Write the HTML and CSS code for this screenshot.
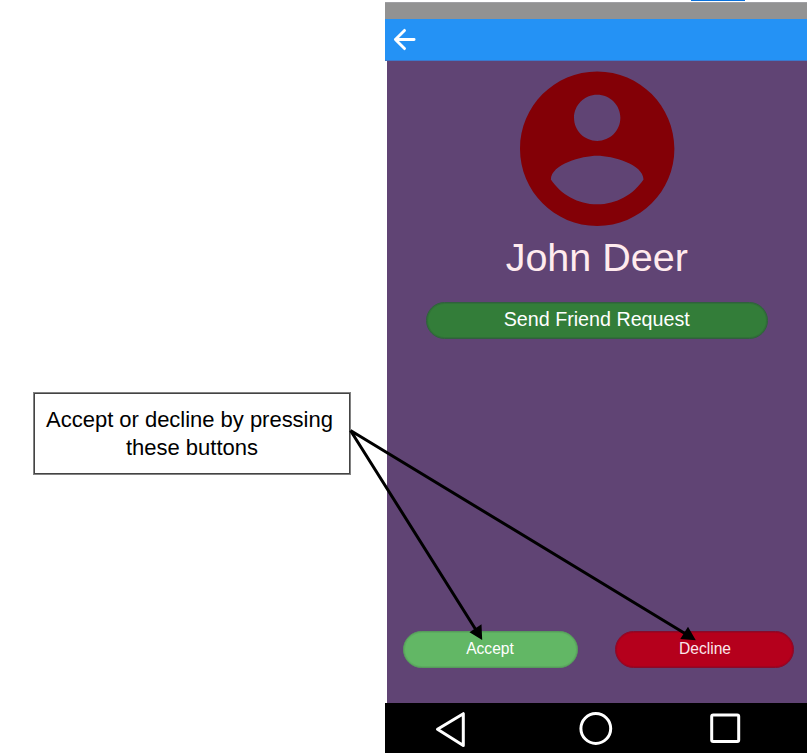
FILE: index.html
```html
<!DOCTYPE html>
<html lang="en">
<head>
<meta charset="utf-8">
<title>Friend request</title>
<link rel="stylesheet" href="styles.css">
</head>
<body>
<main class="page">
  <aside class="callout"><span class="first">Accept or decline by pressing</span> <span>these buttons</span></aside>
  <section class="phone">
    <div class="status-bar"></div>
    <header class="app-bar">
      <svg class="back" viewBox="0 0 24 24"><path d="M22 12H2.5M12 2.5L2.5 12l9.5 9.5"/></svg>
    </header>
    <div class="profile">
      <svg class="avatar" viewBox="2 2 20 20"><path d="M12 2C6.48 2 2 6.48 2 12s4.48 10 10 10 10-4.48 10-10S17.52 2 12 2zm0 3c1.66 0 3 1.34 3 3s-1.34 3-3 3-3-1.34-3-3 1.34-3 3-3zm0 14.2c-2.5 0-4.71-1.28-6-3.22.03-1.99 4-3.08 6-3.08 1.99 0 5.97 1.09 6 3.08-1.29 1.94-3.5 3.22-6 3.22z"/></svg>
      <h1 class="name">John Deer</h1>
      <button class="btn request">Send Friend Request</button>
      <div class="actions">
        <button class="btn accept">Accept</button>
        <button class="btn decline">Decline</button>
      </div>
    </div>
    <nav class="nav-bar">
      <svg viewBox="0 0 422 50">
        <path d="M52.5 26.3L78.3 10.7V42.5Z"/>
        <circle cx="210.8" cy="25.5" r="14.9"/>
        <rect x="326.7" y="12" width="27" height="26.6" rx="1.5"/>
      </svg>
    </nav>
  </section>
  <div class="link-edge"></div>
  <svg class="arrows" viewBox="0 0 808 755">
    <path class="line" d="M350.5 430.5L476 630M350.5 430.5L685 633.5"/>
    <path d="M482.2 640L469.5 632.2L481.5 624.3ZM695.8 640.2L680.3 639L688 626.8Z"/>
  </svg>
</main>
</body>
</html>
```
FILE: styles.css
```css
* { box-sizing: border-box; }
body {
  margin: 0;
  background: #fff;
  font-family: "Liberation Sans", Arial, sans-serif;
  overflow: hidden;
}
.page {
  position: relative;
  display: flex;
  width: 808px;
  height: 755px;
  padding-top: 2px;
}
.callout {
  flex: none;
  width: 318px;
  height: 83px;
  margin: 390px 34px 0 33px;
  padding: 13px 9px;
  border: 1px solid #828282;
  box-shadow: inset 0 0 0 1px #444;
  font-size: 22px;
  line-height: 28px;
  text-align: center;
  color: #000;
}
.callout span { display: block; }
.callout .first { margin-right: 5px; letter-spacing: -0.02px; white-space: nowrap; }
.phone {
  flex: none;
  display: flex;
  flex-direction: column;
  width: 422px;
  height: 751px;
}
.status-bar { height: 17px; background: #929292; border-top: 1px solid #a0a0a4; }
.app-bar {
  height: 42px;
  padding: 9px 0 0 8px;
  background: #2492f5;
  border-bottom: 1px solid #3c78cb;
}
.back {
  display: block;
  width: 23px;
  height: 23px;
  fill: none;
  stroke: #fff;
  stroke-width: 3;
  stroke-linecap: round;
  stroke-linejoin: round;
}
.profile {
  display: flex;
  flex-direction: column;
  align-items: center;
  height: 642px;
  margin-left: 1.5px;
  padding: 10px 0 35px;
  background: #604474;
}
.avatar { width: 154.4px; height: 155.4px; fill: #830006; overflow: visible; }
.name {
  margin: 7.5px 0 0;
  font-size: 39.5px;
  line-height: 46px;
  font-weight: 400;
  color: #ffebee;
}
.btn {
  height: 37px;
  padding: 0;
  border: 1px solid;
  border-radius: 19px;
  font-family: inherit;
  font-size: 15.6px;
  color: #fff;
}
.request {
  width: 342px;
  margin-top: 22px;
  padding-bottom: 1px;
  background: #337d39;
  border-color: #30603e;
  box-shadow: inset 0 0 0 1px #317038;
  font-size: 19.7px;
}
.actions {
  display: flex;
  justify-content: space-between;
  align-self: stretch;
  margin: auto 13.5px 0 16px;
}
.accept {
  width: 175px;
  background: #62b765;
  border-color: #569b5b;
  box-shadow: inset 0 0 0 1px #5cab60;
}
.decline {
  width: 179px;
  background: #b5001c;
  border-color: #8a0a2a;
  box-shadow: inset 0 0 0 1px #a3021e;
  color: #fbe6ea;
}
.accept, .decline { padding-bottom: 1px; }
.decline { padding-left: 2px; }
.nav-bar { height: 50px; background: #000; }
.nav-bar svg {
  display: block;
  width: 422px;
  height: 50px;
  fill: none;
  stroke: #fff;
  stroke-width: 3;
  stroke-linejoin: round;
}
.link-edge {
  position: absolute;
  top: 0;
  left: 691px;
  width: 54px;
  height: 1px;
  background: #0871dd;
}
.arrows { position: absolute; top: 0; left: 0; width: 808px; height: 755px; }
.line { fill: none; stroke: #000; stroke-width: 3; }
```
